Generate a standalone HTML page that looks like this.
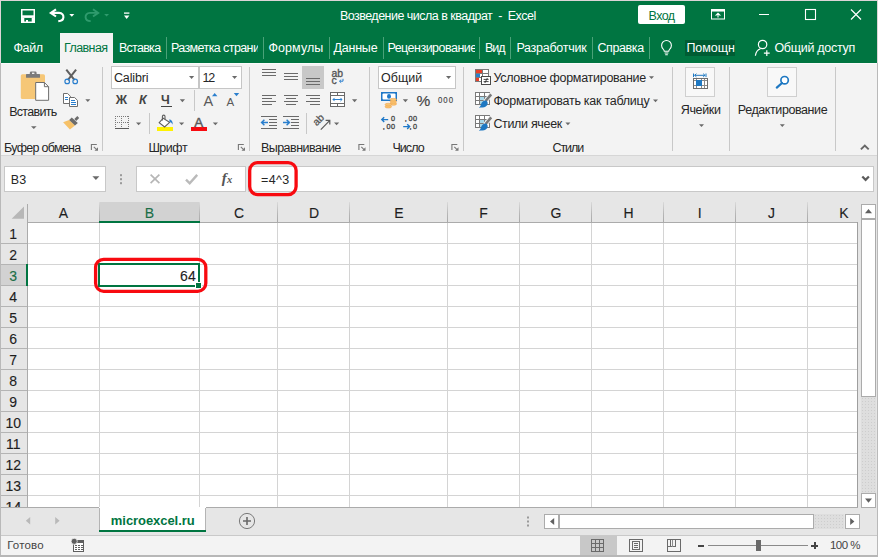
<!DOCTYPE html>
<html><head><meta charset="utf-8"><title>Excel</title>
<style>
html,body{margin:0;padding:0}
body{width:878px;height:557px;overflow:hidden;position:relative;background:#c4c4c4;font-family:"Liberation Sans",sans-serif;color:#262626}
.a{position:absolute}
.t{position:absolute;white-space:pre;display:block}
svg.ic{position:absolute;left:0;top:0;width:878px;height:557px;overflow:visible}
</style></head>
<body>
<div class="a" style="left:1px;top:1px;width:876px;height:554px;background:#f3f3f3;"></div>
<div class="a" style="left:1px;top:1px;width:876px;height:62px;background:#007541;"></div>
<div class="a" style="left:60px;top:33px;width:53px;height:30px;background:#f3f3f3;"></div>
<div class="a" style="left:166px;top:37px;width:1px;height:22px;background:#4aa278;"></div>
<div class="a" style="left:263px;top:37px;width:1px;height:22px;background:#4aa278;"></div>
<div class="a" style="left:329px;top:37px;width:1px;height:22px;background:#4aa278;"></div>
<div class="a" style="left:383px;top:37px;width:1px;height:22px;background:#4aa278;"></div>
<div class="a" style="left:479px;top:37px;width:1px;height:22px;background:#4aa278;"></div>
<div class="a" style="left:510px;top:37px;width:1px;height:22px;background:#4aa278;"></div>
<div class="a" style="left:592px;top:37px;width:1px;height:22px;background:#4aa278;"></div>
<div class="a" style="left:649px;top:37px;width:1px;height:22px;background:#4aa278;"></div>
<div class="a" style="left:685px;top:40px;width:50px;height:16px;background:#005c33;"></div>
<div class="a" style="left:638px;top:5px;width:47px;height:19px;background:#ffffff;border-radius:2px;"></div>
<span class="t" style="left:339.88px;top:10.00px;font-size:12.5px;line-height:12.5px;color:#ffffff;letter-spacing:-0.513px;">Возведение числа в квадрат  -  Excel</span>
<span class="t" style="left:648.58px;top:10.00px;font-size:12.5px;line-height:12.5px;color:#007541;letter-spacing:-0.610px;">Вход</span>
<span class="t" style="left:13.38px;top:42.00px;font-size:12.5px;line-height:12.5px;color:#ffffff;letter-spacing:-0.328px;">Файл</span>
<span class="t" style="left:63.88px;top:42.00px;font-size:12.5px;line-height:12.5px;color:#007541;letter-spacing:-0.555px;">Главная</span>
<span class="t" style="left:118.88px;top:42.00px;font-size:12.5px;line-height:12.5px;color:#ffffff;letter-spacing:-0.703px;">Вставка</span>
<span class="t" style="left:170.88px;top:42.00px;font-size:12.5px;line-height:12.5px;color:#ffffff;letter-spacing:-0.587px;width:87.4px;overflow:hidden;">Разметка страницы</span>
<span class="t" style="left:268.38px;top:42.00px;font-size:12.5px;line-height:12.5px;color:#ffffff;letter-spacing:0.091px;">Формулы</span>
<span class="t" style="left:333.38px;top:42.00px;font-size:12.5px;line-height:12.5px;color:#ffffff;letter-spacing:-0.184px;">Данные</span>
<span class="t" style="left:387.38px;top:42.00px;font-size:12.5px;line-height:12.5px;color:#ffffff;letter-spacing:-0.514px;width:87.9px;overflow:hidden;">Рецензирование</span>
<span class="t" style="left:484.88px;top:42.00px;font-size:12.5px;line-height:12.5px;color:#ffffff;letter-spacing:-0.938px;">Вид</span>
<span class="t" style="left:516.38px;top:42.00px;font-size:12.5px;line-height:12.5px;color:#ffffff;letter-spacing:-0.266px;">Разработчик</span>
<span class="t" style="left:597.38px;top:42.00px;font-size:12.5px;line-height:12.5px;color:#ffffff;letter-spacing:-0.383px;">Справка</span>
<span class="t" style="left:686.38px;top:42.00px;font-size:12.5px;line-height:12.5px;color:#ffffff;letter-spacing:-0.024px;width:48.6px;overflow:hidden;">Помощник</span>
<span class="t" style="left:774.38px;top:42.00px;font-size:12.5px;line-height:12.5px;color:#ffffff;letter-spacing:-0.285px;">Общий доступ</span>
<div class="a" style="left:102px;top:67px;width:1px;height:84px;background:#c8c8c8;"></div>
<div class="a" style="left:249px;top:67px;width:1px;height:84px;background:#c8c8c8;"></div>
<div class="a" style="left:369px;top:67px;width:1px;height:84px;background:#c8c8c8;"></div>
<div class="a" style="left:463px;top:67px;width:1px;height:84px;background:#c8c8c8;"></div>
<div class="a" style="left:672px;top:67px;width:1px;height:84px;background:#c8c8c8;"></div>
<div class="a" style="left:729px;top:67px;width:1px;height:84px;background:#c8c8c8;"></div>
<div class="a" style="left:835px;top:67px;width:1px;height:84px;background:#c8c8c8;"></div>
<div class="a" style="left:194px;top:90px;width:1px;height:21px;background:#c8c8c8;"></div>
<div class="a" style="left:149px;top:113px;width:1px;height:21px;background:#c8c8c8;"></div>
<div class="a" style="left:306px;top:113px;width:1px;height:21px;background:#c8c8c8;"></div>
<div class="a" style="left:1px;top:155px;width:876px;height:1px;background:#d6d6d6;"></div>
<div class="a" style="left:111px;top:66px;width:88px;height:23px;background:#ffffff;border:1px solid #c6c6c6;box-sizing:border-box;"></div>
<div class="a" style="left:199px;top:66px;width:43px;height:23px;background:#ffffff;border:1px solid #c6c6c6;box-sizing:border-box;"></div>
<div class="a" style="left:378px;top:66px;width:78px;height:23px;background:#ffffff;border:1px solid #c6c6c6;box-sizing:border-box;"></div>
<div class="a" style="left:302px;top:66px;width:22px;height:23px;background:#c8c8c8;"></div>
<div class="a" style="left:685px;top:67px;width:30px;height:30px;background:#f8f8f8;border:1px solid #cfcfcf;box-sizing:border-box;"></div>
<div class="a" style="left:767px;top:67px;width:30px;height:30px;background:#f8f8f8;border:1px solid #cfcfcf;box-sizing:border-box;"></div>
<span class="t" style="left:9.18px;top:106.00px;font-size:12.5px;line-height:12.5px;letter-spacing:-0.707px;">Вставить</span>
<span class="t" style="left:4.08px;top:142.00px;font-size:12.5px;line-height:12.5px;letter-spacing:-0.717px;">Буфер обмена</span>
<span class="t" style="left:148.38px;top:142.00px;font-size:12.5px;line-height:12.5px;letter-spacing:-0.473px;">Шрифт</span>
<span class="t" style="left:260.88px;top:142.00px;font-size:12.5px;line-height:12.5px;letter-spacing:-0.509px;">Выравнивание</span>
<span class="t" style="left:392.38px;top:142.00px;font-size:12.5px;line-height:12.5px;letter-spacing:-0.926px;">Число</span>
<span class="t" style="left:552.38px;top:142.00px;font-size:12.5px;line-height:12.5px;letter-spacing:-1.016px;">Стили</span>
<span class="t" style="left:113.97px;top:72.00px;font-size:12.5px;line-height:12.5px;letter-spacing:-0.131px;">Calibri</span>
<span class="t" style="left:202.38px;top:72.00px;font-size:12.5px;line-height:12.5px;letter-spacing:-1.200px;">12</span>
<span class="t" style="left:380.98px;top:72.00px;font-size:12.5px;line-height:12.5px;letter-spacing:0.027px;">Общий</span>
<span class="t" style="left:115.78px;top:94.00px;font-size:12.5px;line-height:12.5px;color:#444444;font-weight:bold;letter-spacing:1.200px;">Ж</span>
<span class="t" style="left:138.88px;top:94.00px;font-size:12.5px;line-height:12.5px;color:#444444;font-weight:bold;font-style:italic;letter-spacing:1.200px;">К</span>
<span class="t" style="left:160.88px;top:94.00px;font-size:12.5px;line-height:12.5px;color:#444444;font-weight:bold;letter-spacing:1.200px;">Ч</span>
<div class="a" style="left:161px;top:105.5px;width:10.5px;height:1px;background:#444444;"></div>
<span class="t" style="left:416.62px;top:93.00px;font-size:15.5px;line-height:15.5px;color:#444444;-webkit-text-stroke:0.15px;">%</span>
<span class="t" style="left:437.54px;top:96.00px;font-size:9.2px;line-height:9.2px;color:#444444;transform:scaleX(0.85);transform-origin:0 0;-webkit-text-stroke:0.15px;letter-spacing:1.200px;">000</span>
<span class="t" style="left:493.38px;top:72.00px;font-size:12.5px;line-height:12.5px;letter-spacing:-0.281px;">Условное форматирование</span>
<span class="t" style="left:493.38px;top:95.00px;font-size:12.5px;line-height:12.5px;letter-spacing:-0.266px;">Форматировать как таблицу</span>
<span class="t" style="left:493.38px;top:118.00px;font-size:12.5px;line-height:12.5px;letter-spacing:-0.329px;">Стили ячеек</span>
<span class="t" style="left:680.77px;top:104.00px;font-size:12.5px;line-height:12.5px;letter-spacing:-0.358px;">Ячейки</span>
<span class="t" style="left:737.77px;top:104.00px;font-size:12.5px;line-height:12.5px;letter-spacing:-0.414px;">Редактирование</span>
<div class="a" style="left:1px;top:156px;width:876px;height:46px;background:#e6e6e6;"></div>
<div class="a" style="left:4px;top:166px;width:102px;height:26px;background:#ffffff;border:1px solid #c8c8c8;box-sizing:border-box;"></div>
<div class="a" style="left:136px;top:166px;width:110px;height:26px;background:#ffffff;border:1px solid #c8c8c8;box-sizing:border-box;"></div>
<div class="a" style="left:248px;top:166px;width:626px;height:26px;background:#ffffff;border:1px solid #c8c8c8;box-sizing:border-box;"></div>
<span class="t" style="left:10.78px;top:174.00px;font-size:12.5px;line-height:12.5px;letter-spacing:0.153px;">B3</span>
<span class="t" style="left:261.07px;top:174.00px;font-size:12.5px;line-height:12.5px;letter-spacing:0.357px;">=4^3</span>
<span class="t" style="left:221.85px;top:171.00px;font-size:15px;line-height:15px;color:#555555;font-weight:bold;font-style:italic;font-family:'Liberation Serif',serif;">f</span>
<span class="t" style="left:227.07px;top:175.00px;font-size:10.5px;line-height:10.5px;color:#555555;font-weight:bold;font-style:italic;font-family:'Liberation Serif',serif;letter-spacing:1.200px;">x</span>
<div class="a" style="left:1px;top:202px;width:876px;height:306px;background:#e6e6e6;"></div>
<div class="a" style="left:27px;top:223px;width:830px;height:284px;background:#ffffff;"></div>
<div class="a" style="left:99px;top:202px;width:101px;height:19px;background:#d2d2d2;"></div>
<div class="a" style="left:1px;top:264px;width:26px;height:21px;background:#d2d2d2;"></div>
<div class="a" style="left:27px;top:243px;width:830px;height:1px;background:#d4d4d4;"></div>
<div class="a" style="left:27px;top:264px;width:830px;height:1px;background:#d4d4d4;"></div>
<div class="a" style="left:27px;top:285px;width:830px;height:1px;background:#d4d4d4;"></div>
<div class="a" style="left:27px;top:306px;width:830px;height:1px;background:#d4d4d4;"></div>
<div class="a" style="left:27px;top:327px;width:830px;height:1px;background:#d4d4d4;"></div>
<div class="a" style="left:27px;top:348px;width:830px;height:1px;background:#d4d4d4;"></div>
<div class="a" style="left:27px;top:369px;width:830px;height:1px;background:#d4d4d4;"></div>
<div class="a" style="left:27px;top:390px;width:830px;height:1px;background:#d4d4d4;"></div>
<div class="a" style="left:27px;top:411px;width:830px;height:1px;background:#d4d4d4;"></div>
<div class="a" style="left:27px;top:432px;width:830px;height:1px;background:#d4d4d4;"></div>
<div class="a" style="left:27px;top:453px;width:830px;height:1px;background:#d4d4d4;"></div>
<div class="a" style="left:27px;top:474px;width:830px;height:1px;background:#d4d4d4;"></div>
<div class="a" style="left:27px;top:495px;width:830px;height:1px;background:#d4d4d4;"></div>
<div class="a" style="left:99px;top:223px;width:1px;height:284px;background:#d4d4d4;"></div>
<div class="a" style="left:199px;top:223px;width:1px;height:284px;background:#d4d4d4;"></div>
<div class="a" style="left:277px;top:223px;width:1px;height:284px;background:#d4d4d4;"></div>
<div class="a" style="left:349px;top:223px;width:1px;height:284px;background:#d4d4d4;"></div>
<div class="a" style="left:447px;top:223px;width:1px;height:284px;background:#d4d4d4;"></div>
<div class="a" style="left:519px;top:223px;width:1px;height:284px;background:#d4d4d4;"></div>
<div class="a" style="left:591px;top:223px;width:1px;height:284px;background:#d4d4d4;"></div>
<div class="a" style="left:663px;top:223px;width:1px;height:284px;background:#d4d4d4;"></div>
<div class="a" style="left:735px;top:223px;width:1px;height:284px;background:#d4d4d4;"></div>
<div class="a" style="left:807px;top:223px;width:1px;height:284px;background:#d4d4d4;"></div>
<div class="a" style="left:99px;top:202px;width:1px;height:20px;background:linear-gradient(#dadada,#b6b6b6 60%,#a9a9a9);"></div>
<div class="a" style="left:199px;top:202px;width:1px;height:20px;background:linear-gradient(#dadada,#b6b6b6 60%,#a9a9a9);"></div>
<div class="a" style="left:277px;top:202px;width:1px;height:20px;background:linear-gradient(#dadada,#b6b6b6 60%,#a9a9a9);"></div>
<div class="a" style="left:349px;top:202px;width:1px;height:20px;background:linear-gradient(#dadada,#b6b6b6 60%,#a9a9a9);"></div>
<div class="a" style="left:447px;top:202px;width:1px;height:20px;background:linear-gradient(#dadada,#b6b6b6 60%,#a9a9a9);"></div>
<div class="a" style="left:519px;top:202px;width:1px;height:20px;background:linear-gradient(#dadada,#b6b6b6 60%,#a9a9a9);"></div>
<div class="a" style="left:591px;top:202px;width:1px;height:20px;background:linear-gradient(#dadada,#b6b6b6 60%,#a9a9a9);"></div>
<div class="a" style="left:663px;top:202px;width:1px;height:20px;background:linear-gradient(#dadada,#b6b6b6 60%,#a9a9a9);"></div>
<div class="a" style="left:735px;top:202px;width:1px;height:20px;background:linear-gradient(#dadada,#b6b6b6 60%,#a9a9a9);"></div>
<div class="a" style="left:807px;top:202px;width:1px;height:20px;background:linear-gradient(#dadada,#b6b6b6 60%,#a9a9a9);"></div>
<div class="a" style="left:1px;top:243px;width:26px;height:1px;background:#b4b4b4;"></div>
<div class="a" style="left:1px;top:264px;width:26px;height:1px;background:#b4b4b4;"></div>
<div class="a" style="left:1px;top:285px;width:26px;height:1px;background:#b4b4b4;"></div>
<div class="a" style="left:1px;top:306px;width:26px;height:1px;background:#b4b4b4;"></div>
<div class="a" style="left:1px;top:327px;width:26px;height:1px;background:#b4b4b4;"></div>
<div class="a" style="left:1px;top:348px;width:26px;height:1px;background:#b4b4b4;"></div>
<div class="a" style="left:1px;top:369px;width:26px;height:1px;background:#b4b4b4;"></div>
<div class="a" style="left:1px;top:390px;width:26px;height:1px;background:#b4b4b4;"></div>
<div class="a" style="left:1px;top:411px;width:26px;height:1px;background:#b4b4b4;"></div>
<div class="a" style="left:1px;top:432px;width:26px;height:1px;background:#b4b4b4;"></div>
<div class="a" style="left:1px;top:453px;width:26px;height:1px;background:#b4b4b4;"></div>
<div class="a" style="left:1px;top:474px;width:26px;height:1px;background:#b4b4b4;"></div>
<div class="a" style="left:1px;top:495px;width:26px;height:1px;background:#b4b4b4;"></div>
<div class="a" style="left:27px;top:222px;width:831px;height:1px;background:#ababab;"></div>
<div class="a" style="left:27px;top:204px;width:1px;height:303px;background:#ababab;"></div>
<div class="a" style="left:857px;top:222px;width:1px;height:286px;background:#9e9e9e;"></div>
<div class="a" style="left:1px;top:507px;width:857px;height:1px;background:#ababab;"></div>
<div class="a" style="left:99px;top:221px;width:101px;height:2px;background:#007541;"></div>
<div class="a" style="left:26px;top:264px;width:2px;height:22px;background:#007541;"></div>
<span class="t" style="left:58.83px;top:206.00px;font-size:14px;line-height:14px;color:#1e1e1e;-webkit-text-stroke:0.12px;">A</span>
<span class="t" style="left:144.83px;top:206.00px;font-size:14px;line-height:14px;color:#1b6e47;-webkit-text-stroke:0.12px;">B</span>
<span class="t" style="left:233.94px;top:206.00px;font-size:14px;line-height:14px;color:#1e1e1e;-webkit-text-stroke:0.12px;">C</span>
<span class="t" style="left:308.94px;top:206.00px;font-size:14px;line-height:14px;color:#1e1e1e;-webkit-text-stroke:0.12px;">D</span>
<span class="t" style="left:394.33px;top:206.00px;font-size:14px;line-height:14px;color:#1e1e1e;-webkit-text-stroke:0.12px;">E</span>
<span class="t" style="left:479.22px;top:206.00px;font-size:14px;line-height:14px;color:#1e1e1e;-webkit-text-stroke:0.12px;">F</span>
<span class="t" style="left:550.55px;top:206.00px;font-size:14px;line-height:14px;color:#1e1e1e;-webkit-text-stroke:0.12px;">G</span>
<span class="t" style="left:623.44px;top:206.00px;font-size:14px;line-height:14px;color:#1e1e1e;-webkit-text-stroke:0.12px;">H</span>
<span class="t" style="left:697.85px;top:206.00px;font-size:14px;line-height:14px;color:#1e1e1e;-webkit-text-stroke:0.12px;">I</span>
<span class="t" style="left:768.00px;top:206.00px;font-size:14px;line-height:14px;color:#1e1e1e;-webkit-text-stroke:0.12px;">J</span>
<span class="t" style="left:839.33px;top:206.00px;font-size:14px;line-height:14px;color:#1e1e1e;-webkit-text-stroke:0.12px;">K</span>
<span class="t" style="left:9.30px;top:227.00px;font-size:14px;line-height:14px;color:#1e1e1e;-webkit-text-stroke:0.12px;">1</span>
<span class="t" style="left:9.30px;top:248.00px;font-size:14px;line-height:14px;color:#1e1e1e;-webkit-text-stroke:0.12px;">2</span>
<span class="t" style="left:9.30px;top:269.00px;font-size:14px;line-height:14px;color:#1b6e47;-webkit-text-stroke:0.12px;">3</span>
<span class="t" style="left:9.30px;top:290.00px;font-size:14px;line-height:14px;color:#1e1e1e;-webkit-text-stroke:0.12px;">4</span>
<span class="t" style="left:9.30px;top:311.00px;font-size:14px;line-height:14px;color:#1e1e1e;-webkit-text-stroke:0.12px;">5</span>
<span class="t" style="left:9.30px;top:332.00px;font-size:14px;line-height:14px;color:#1e1e1e;-webkit-text-stroke:0.12px;">6</span>
<span class="t" style="left:9.30px;top:353.00px;font-size:14px;line-height:14px;color:#1e1e1e;-webkit-text-stroke:0.12px;">7</span>
<span class="t" style="left:9.30px;top:374.00px;font-size:14px;line-height:14px;color:#1e1e1e;-webkit-text-stroke:0.12px;">8</span>
<span class="t" style="left:9.30px;top:395.00px;font-size:14px;line-height:14px;color:#1e1e1e;-webkit-text-stroke:0.12px;">9</span>
<span class="t" style="left:5.41px;top:416.00px;font-size:14px;line-height:14px;color:#1e1e1e;-webkit-text-stroke:0.12px;">10</span>
<span class="t" style="left:5.93px;top:437.00px;font-size:14px;line-height:14px;color:#1e1e1e;-webkit-text-stroke:0.12px;">11</span>
<span class="t" style="left:5.41px;top:458.00px;font-size:14px;line-height:14px;color:#1e1e1e;-webkit-text-stroke:0.12px;">12</span>
<span class="t" style="left:5.41px;top:479.00px;font-size:14px;line-height:14px;color:#1e1e1e;-webkit-text-stroke:0.12px;">13</span>
<div class="a" style="left:1px;top:496px;width:26px;height:11px;overflow:hidden"><span class="t" style="left:4.6px;top:4px;color:#1e1e1e;font-size:14px;line-height:14px;-webkit-text-stroke:.25px">14</span></div>
<div class="a" style="left:98px;top:263px;width:102px;height:24px;border:2px solid #007541;box-sizing:border-box;"></div>
<div class="a" style="left:195px;top:282px;width:7px;height:7px;background:#ffffff;"></div>
<div class="a" style="left:196px;top:283px;width:5px;height:5px;background:#007541;"></div>
<span class="t" style="left:180.12px;top:269.00px;font-size:14px;line-height:14px;color:#1e1e1e;-webkit-text-stroke:0.12px;">64</span>
<svg class="ic" viewBox="0 0 878 557"><g fill="none" stroke="#f80a10" stroke-width="3.3"><rect x="249.7" y="162.6" width="46.4" height="32" rx="8"/><rect x="95.6" y="259.3" width="110.2" height="32" rx="8"/></g></svg>
<div class="a" style="left:861px;top:204px;width:15px;height:15px;background:#ffffff;border:1px solid #ababab;box-sizing:border-box;"></div>
<div class="a" style="left:861px;top:219px;width:15px;height:178px;background:#ffffff;border:1px solid #ababab;box-sizing:border-box;"></div>
<div class="a" style="left:861px;top:397px;width:15px;height:96px;background:#dedede;background-image:radial-gradient(circle,#cdcdcd 0.7px,transparent 0.9px);background-size:3px 3px;"></div>
<div class="a" style="left:861px;top:493px;width:15px;height:15px;background:#ffffff;border:1px solid #ababab;box-sizing:border-box;"></div>
<div class="a" style="left:1px;top:508px;width:876px;height:27px;background:#e6e6e6;"></div>
<div class="a" style="left:99px;top:507px;width:107px;height:24px;background:#ffffff;"></div>
<div class="a" style="left:99px;top:530px;width:107px;height:2px;background:#007541;"></div>
<div class="a" style="left:99px;top:508px;width:1px;height:22px;background:#b4b4b4;"></div>
<div class="a" style="left:205px;top:508px;width:1px;height:22px;background:#b4b4b4;"></div>
<span class="t" style="left:110.85px;top:514.00px;font-size:13px;line-height:13px;color:#007541;font-weight:bold;letter-spacing:-0.062px;">microexcel.ru</span>
<div class="a" style="left:544px;top:514px;width:15px;height:15px;background:#ffffff;border:1px solid #ababab;box-sizing:border-box;"></div>
<div class="a" style="left:559px;top:514px;width:255px;height:15px;background:#ffffff;border:1px solid #ababab;box-sizing:border-box;"></div>
<div class="a" style="left:814px;top:514px;width:30px;height:15px;background:#dedede;background-image:radial-gradient(circle,#cdcdcd 0.7px,transparent 0.9px);background-size:3px 3px;"></div>
<div class="a" style="left:845px;top:514px;width:15px;height:15px;background:#ffffff;border:1px solid #ababab;box-sizing:border-box;"></div>
<div class="a" style="left:1px;top:535px;width:876px;height:1px;background:#c9c9c9;"></div>
<div class="a" style="left:1px;top:536px;width:876px;height:19px;background:#f3f3f3;"></div>
<div class="a" style="left:580px;top:536px;width:37px;height:19px;background:#c8c8c8;"></div>
<span class="t" style="left:7.22px;top:540.00px;font-size:11.5px;line-height:11.5px;color:#444444;letter-spacing:0.167px;">Готово</span>
<span class="t" style="left:829.92px;top:540.00px;font-size:11.5px;line-height:11.5px;color:#444444;letter-spacing:-0.490px;">100 %</span>
<div class="a" style="left:0px;top:0px;width:878px;height:1px;background:#dcd5d7;"></div>
<div class="a" style="left:0px;top:1px;width:1px;height:62px;background:#dcd5d7;"></div>
<div class="a" style="left:877px;top:1px;width:1px;height:62px;background:#dcd5d7;"></div>
<div class="a" style="left:0px;top:63px;width:1px;height:494px;background:#b9b9b9;"></div>
<div class="a" style="left:877px;top:63px;width:1px;height:494px;background:#b9b9b9;"></div>
<div class="a" style="left:0px;top:555px;width:878px;height:2px;background:#b7b7b7;"></div>
<div class="a" style="left:1px;top:63px;width:876px;height:1px;background:#fafafa;"></div>
<div class="a" style="left:60px;top:63px;width:53px;height:1px;background:#f3f3f3;"></div>
<svg class="ic" viewBox="0 0 878 557" font-family="Liberation Sans, sans-serif">
<!-- ===== title bar / QAT ===== -->
<g fill="none" stroke="#fff">
  <rect x="21.75" y="9.75" width="12.5" height="12.5" stroke-width="1.5"/>
  <path d="M22 16.6H34" stroke-width="2.6"/>
  <path d="M23 18v4M33 18v4" stroke-width="2.6"/>
  <path d="M27 20v2.4" stroke-width="2"/>
  <!-- undo -->
  <path d="M56 9.3 L50.8 12.9 L56 16.5" stroke-width="2.1"/>
  <path d="M51.2 12.9 H59 C62.4 12.9 63.6 15.4 63.4 17.3 C63.2 19.6 61.2 21 58.3 21.1" stroke-width="2.1"/>
  <!-- customize -->
  <path d="M124 13.1H129.4" stroke-width="1.3"/>
  <!-- ribbon display -->
  <rect x="711.5" y="9.5" width="13" height="9.5" stroke-width="1"/>
  <path d="M711.5 10.7H724.5" stroke-width="1.7"/>
  <path d="M718 17.6V13.3M715.6 15.6l2.4-2.4 2.4 2.4" stroke-width="1.1"/>
  <!-- min / max / close -->
  <path d="M759 14.5H769" stroke-width="1"/>
  <rect x="805.5" y="9.5" width="10" height="10" stroke-width="1.1"/>
  <path d="M851 9.5l10 10M861 9.5l-10 10" stroke-width="1.2"/>
  <!-- bulb -->
  <path d="M664.3 51.2 C664.3 49.5 661.6 48.6 661.6 45.4 A4.9 4.9 0 0 1 671.4 45.4 C671.4 48.6 668.7 49.5 668.7 51.2 Z" stroke-width="1.1"/>
  <path d="M664.6 53H668.4M665.2 54.8H667.8" stroke-width="1.1"/>
  <!-- share -->
  <circle cx="762.6" cy="44.5" r="4.2" stroke-width="1.2"/>
  <path d="M755.4 55.8 C755.9 51.6 758 49.6 760.4 48.8" stroke-width="1.2"/>
  <path d="M766.8 50.2V56M763.9 53.1H769.7" stroke-width="1.2"/>
</g>
<g fill="#fff">
  <path d="M69.3 14h5l-2.5 2.8z"/>
  <path d="M124 15.6h5.4l-2.7 3.4z"/>
</g>
<!-- redo (disabled) -->
<g fill="none" stroke="#2f9b6d" stroke-width="1.9">
  <path d="M93 9.3 L98.2 12.9 L93 16.5"/>
  <path d="M97.8 12.9 H90 C86.6 12.9 85.4 15.4 85.6 17.3 C85.8 19.6 87.8 21 90.7 21.1"/>
</g>
<path d="M104.2 14h4.8l-2.4 2.6z" fill="#2f9b6d"/>

<!-- ===== Clipboard group ===== -->
<rect x="20.8" y="74.2" width="24.2" height="24.8" rx="1.6" fill="#f6c777"/>
<rect x="26" y="74" width="14" height="3.8" rx=".6" fill="#7b7b7b"/>
<path d="M29.8 75v-2.2a1.4 1.4 0 0 1 1.4-1.4h4a1.4 1.4 0 0 1 1.4 1.4V75z" fill="#7b7b7b"/>
<rect x="32" y="72.6" width="2.4" height="1.4" fill="#f3f3f3"/>
<path d="M35.7 82.5H44.4L48.6 86.7V100.3H35.7Z" fill="#fff" stroke="#6e6e6e" stroke-width="1"/>
<path d="M44.4 82.5V86.7H48.6" fill="none" stroke="#6e6e6e" stroke-width="1"/>
<path d="M31 126.2h5.6l-2.8 2.9z" fill="#6a6a6a"/>
<!-- scissors -->
<g fill="none">
  <path d="M66.3 69.7 L74.6 80.2M76.1 69.7 L67.8 80.2" stroke="#5f5f5f" stroke-width="2"/>
  <circle cx="67.2" cy="81.4" r="2.3" stroke="#2a7fce" stroke-width="1.2"/>
  <circle cx="75.2" cy="81.4" r="2.3" stroke="#2a7fce" stroke-width="1.2"/>
</g>
<!-- copy -->
<g fill="#fff" stroke="#6e6e6e" stroke-width="1">
  <path d="M63.5 93.5H67.6L70.5 96.4V103.5H63.5Z"/>
  <path d="M69.5 97.5H74.6L77.5 100.4V106.5H69.5Z"/>
</g>
<path d="M65 97.5h3M65 99.5h3M71 100.5h4M71 102.5h5M71 104.5h5" stroke="#2a7fce" stroke-width="1" fill="none" shape-rendering="crispEdges"/>
<path d="M85.3 99.3h5l-2.5 2.8z" fill="#6a6a6a"/>
<!-- format painter -->
<path d="M69.1 119.9 L75 125.4 L69.9 129.4 L63.1 122.3 Z" fill="#f6c168"/>
<path d="M71.8 117.5 L77.8 123 L75 125.4 L69.1 119.9 Z" fill="#6b6b6b"/>
<path d="M74.3 119.1 L77.3 116.1 L79.2 118 L76.2 121 Z" fill="#6b6b6b"/>
<!-- dialog launchers -->
<g><path d="M91.4 150V144.5H96.8" fill="none" stroke="#777" stroke-width="1.1"/><path d="M93.8 146.9L96.6 149.7" fill="none" stroke="#777" stroke-width="1.1"/><path d="M98 147.3V150.8H94.5z" fill="#777"/></g>
<g transform="translate(147 0)"><path d="M91.4 150V144.5H96.8" fill="none" stroke="#777" stroke-width="1.1"/><path d="M93.8 146.9L96.6 149.7" fill="none" stroke="#777" stroke-width="1.1"/><path d="M98 147.3V150.8H94.5z" fill="#777"/></g>
<g transform="translate(267.5 0)"><path d="M91.4 150V144.5H96.8" fill="none" stroke="#777" stroke-width="1.1"/><path d="M93.8 146.9L96.6 149.7" fill="none" stroke="#777" stroke-width="1.1"/><path d="M98 147.3V150.8H94.5z" fill="#777"/></g>
<g transform="translate(360.5 0)"><path d="M91.4 150V144.5H96.8" fill="none" stroke="#777" stroke-width="1.1"/><path d="M93.8 146.9L96.6 149.7" fill="none" stroke="#777" stroke-width="1.1"/><path d="M98 147.3V150.8H94.5z" fill="#777"/></g>

<!-- ===== Font group ===== -->
<g fill="#6a6a6a">
  <path d="M189 76.1h5.2l-2.6 2.9z"/>
  <path d="M232 76.1h5.2l-2.6 2.9z"/>
  <path d="M179.8 99.3h5.2l-2.6 2.9z"/>
  <path d="M136 122.4h5.2l-2.6 2.9z"/>
  <path d="M179 122.4h5.2l-2.6 2.9z"/>
  <path d="M212.8 122.4h5.2l-2.6 2.9z"/>
</g>
<text x="203.6" y="105.8" font-size="14.5" fill="#5a5a5a">A</text>
<text x="226.6" y="105.8" font-size="11.5" fill="#5a5a5a">A</text>
<path d="M212 96.2h5.4l-2.7-3.2z" fill="#2a7fce"/>
<path d="M233.8 93h5.4l-2.7 3.2z" fill="#2a7fce"/>
<!-- borders icon -->
<g stroke="#6a6a6a" stroke-width="1" fill="none">
  <path d="M115 116.5H129M115 122.5H129M115.5 116V128M121.5 116V128M128.5 116V128" stroke-dasharray="1 1" shape-rendering="crispEdges" stroke="#7a7a7a"/>
  <path d="M115 128.5H129" shape-rendering="crispEdges" stroke="#5a5a5a"/>
</g>
<!-- fill bucket -->
<rect x="157" y="127" width="16" height="4" fill="#fff200"/>
<g fill="none" stroke="#5f5f5f" stroke-width="1.1">
  <path d="M163.2 118.2 L169.6 122.4 L164.6 127 L159.2 122.6 Z" fill="#fff"/>
  <path d="M162.4 120.4V116.4a1.3 1.3 0 0 1 2.6 0v2.6"/>
</g>
<path d="M169.4 119.2c2.6.6 3.6 2.6 3.2 5.6c-.6-1.6-1.6-2.6-3.2-3z" fill="#2a7fce"/>
<!-- font color -->
<rect x="191" y="127" width="16" height="4" fill="#f80a10"/>
<text x="194.2" y="126.5" font-size="13.4" fill="#5a5a5a" stroke="#5a5a5a" stroke-width=".45">A</text>

<!-- ===== Alignment group ===== -->
<g stroke="#6a6a6a" stroke-width="1" fill="none" shape-rendering="crispEdges">
  <path d="M262 69.5h14M262 72.5h14M262 75.5h14"/>
  <path d="M284 73.5h14M284 76.5h14M284 79.5h14"/>
  <path d="M306 78.5h14M306 81.5h14M306 84.5h14"/>
  <path d="M262 95.5h14M262 98.5h10M262 101.5h14M262 104.5h10"/>
  <path d="M284 95.5h14M286 98.5h10M284 101.5h14M286 104.5h10"/>
  <path d="M306 95.5h14M310 98.5h10M306 101.5h14M310 104.5h10"/>
  <path d="M261 116.5h16M261 128.5h16M269 119.5h8M269 122.5h8M269 125.5h8"/>
  <path d="M283 116.5h16M283 128.5h16M291 119.5h8M291 122.5h8M291 125.5h8"/>
</g>
<g stroke="#2a7fce" stroke-width="1.5" fill="none">
  <path d="M261.6 122.5h6.4M264.4 119.8l-2.8 2.7 2.8 2.7"/>
  <path d="M283 122.5h6.4M286.6 119.8l2.8 2.7-2.8 2.7"/>
</g>
<!-- wrap text -->
<text x="331.4" y="77.2" font-size="10.4" fill="#555" stroke="#555" stroke-width=".35">ab</text>
<text x="331.4" y="84" font-size="10.4" fill="#555" stroke="#555" stroke-width=".35">c</text>
<path d="M343 78.8v2.4h-3.4M341.2 79.6l-1.7 1.6 1.7 1.6" stroke="#2a7fce" stroke-width="1" fill="none"/>
<!-- merge -->
<g stroke="#6a6a6a" stroke-width="1" fill="none" shape-rendering="crispEdges">
  <rect x="330.5" y="92.5" width="14" height="14" fill="#fff"/>
  <path d="M330.5 95.5h14M330.5 103.5h14M337.5 92.5v3M337.5 103.5v3"/>
</g>
<path d="M333 99.5h9M334.6 97.9l-1.6 1.6 1.6 1.6M340.4 97.9l1.6 1.6-1.6 1.6" stroke="#2a7fce" stroke-width="1" fill="none"/>
<g fill="#6a6a6a">
  <path d="M352 99.3h5.2l-2.6 2.9z"/>
  <path d="M334 122.4h5.2l-2.6 2.9z"/>
</g>
<!-- orientation -->
<text transform="translate(316.8 126.2) rotate(-45)" font-size="10.2" fill="#555" stroke="#555" stroke-width=".3">ab</text>
<path d="M320.8 129.6L329.6 120.6M325.6 120.4h4.2v4.2" stroke="#5a5a5a" stroke-width="1.2" fill="none"/>

<!-- ===== Number group ===== -->
<path d="M446 76.1h5.2l-2.6 2.9z" fill="#6a6a6a"/>
<rect x="381" y="92" width="16" height="9" fill="#1e78c8"/>
<rect x="382.5" y="93.5" width="13" height="6" rx="1" fill="#fff"/>
<ellipse cx="389" cy="96.4" rx="2" ry="2.3" fill="#1e78c8"/>
<g fill="#f8c572" stroke="#ee9d4a" stroke-width=".5">
  <ellipse cx="393.3" cy="103.9" rx="3.3" ry="1.4"/>
  <ellipse cx="393.3" cy="101.8" rx="3.3" ry="1.4"/>
  <ellipse cx="393.3" cy="99.7" rx="3.3" ry="1.4"/>
  <ellipse cx="388.3" cy="106.7" rx="3.3" ry="1.4"/>
  <ellipse cx="388.3" cy="104.6" rx="3.3" ry="1.4"/>
</g>
<path d="M402.8 99.3h5.2l-2.6 2.9z" fill="#6a6a6a"/>
<!-- decimals -->
<g font-size="7.3" fill="#444" stroke="#444" stroke-width=".3">
  <text x="390.9" y="121.2">0</text>
  <text x="382.8 386.4 390.9" y="128.8">,00</text>
  <text x="404.8 408.4 412.9" y="121.2">,00</text>
  <text x="409.4 412.9" y="128.8">,0</text>
</g>
<g stroke="#1e78c8" stroke-width="1.4" fill="none">
  <path d="M381.8 119.6h6.4M384.2 117.2l-2.4 2.4 2.4 2.4"/>
  <path d="M403.2 126.6h6.4M407.2 124.2l2.4 2.4-2.4 2.4"/>
</g>

<!-- ===== Styles group ===== -->
<g shape-rendering="crispEdges">
  <rect x="475.5" y="69.5" width="13" height="12" fill="#fff" stroke="#7a7a7a"/>
  <path d="M475.5 73.5h13M475.5 77.5h13M482.5 69.5v12" stroke="#7a7a7a" fill="none"/>
  <rect x="476" y="70" width="6" height="3" fill="#e8402a"/>
  <rect x="476" y="74" width="4" height="3" fill="#2a7fce"/>
  <rect x="476" y="78" width="3" height="3" fill="#e8402a"/>
  <rect x="481.5" y="76.5" width="9" height="8" fill="#fff" stroke="#4a4a4a"/>
</g>
<path d="M483.6 79.4h5M483.6 81.6h5M487.4 78l-2.6 5" stroke="#333" stroke-width=".9" fill="none"/>
<g>
  <g shape-rendering="crispEdges" stroke="#7a7a7a" fill="none">
    <rect x="475.5" y="92.5" width="14" height="12" fill="#fff"/>
    <path d="M475.5 96.5h14M475.5 100.5h14M479.5 92.5v12M484.5 92.5v12"/>
    <rect x="480" y="97" width="4" height="3" fill="#a8d8ea" stroke="none"/>
    <rect x="485" y="97" width="4" height="3" fill="#a8d8ea" stroke="none"/>
    <rect x="480" y="101" width="4" height="3" fill="#a8d8ea" stroke="none"/>
  </g>
  <path d="M491.4 94.2l-6.4 7.4" stroke="#f3f3f3" stroke-width="4.4"/>
  <path d="M491.2 94.4l-5.6 6.6" stroke="#7a7a7a" stroke-width="2.6"/>
  <path d="M486.6 100.8c1.8 1.6 1.4 4.4-.8 5.8c-2 1.2-4.6.8-7 1.4c1.6-1.2 1.8-2.4 2.4-4.2c.8-2.4 3.4-4 5.4-3z" fill="#1e78c2"/>
</g>
<g transform="translate(0 23)">
  <g shape-rendering="crispEdges" stroke="#7a7a7a" fill="none">
    <rect x="475.5" y="92.5" width="14" height="12" fill="#fff"/>
    <path d="M475.5 96.5h14M475.5 100.5h14M479.5 92.5v12M484.5 92.5v12"/>
    <rect x="480" y="97" width="4" height="3" fill="#a8d8ea" stroke="none"/>
    <rect x="485" y="97" width="4" height="3" fill="#a8d8ea" stroke="none"/>
    <rect x="480" y="101" width="4" height="3" fill="#a8d8ea" stroke="none"/>
  </g>
  <path d="M491.4 94.2l-6.4 7.4" stroke="#f3f3f3" stroke-width="4.4"/>
  <path d="M491.2 94.4l-5.6 6.6" stroke="#7a7a7a" stroke-width="2.6"/>
  <path d="M486.6 100.8c1.8 1.6 1.4 4.4-.8 5.8c-2 1.2-4.6.8-7 1.4c1.6-1.2 1.8-2.4 2.4-4.2c.8-2.4 3.4-4 5.4-3z" fill="#1e78c2"/>
</g>

<g fill="#6a6a6a">
  <path d="M649 76.3h5l-2.5 2.8z"/>
  <path d="M653 99.4h5l-2.5 2.8z"/>
  <path d="M565.4 122.4h5l-2.5 2.8z"/>
  <path d="M699 124.3h5l-2.5 2.8z"/>
  <path d="M779.8 124.3h5l-2.5 2.8z"/>
</g>
<!-- cells icon -->
<g shape-rendering="crispEdges" stroke="#6e6e6e" fill="none">
  <rect x="693.5" y="78.5" width="14" height="10" fill="#fff"/>
  <path d="M693.5 80.5h14M693.5 85.5h14M696.5 78.5v10M701.5 78.5v10M704.5 78.5v10" stroke="#8a8a8a"/>
  <rect x="693.5" y="78.5" width="14" height="10"/>
  <rect x="696" y="80" width="6" height="6" fill="#1e78c2" stroke="none"/>
</g>
<path d="M693.5 73.5v3.6M706 73.5v3.6M694.5 75.3h10.6M696.4 73.7l-1.7 1.6 1.7 1.6M703.2 73.7l1.7 1.6-1.7 1.6" stroke="#1e78c2" stroke-width="1" fill="none"/>
<!-- search icon -->
<circle cx="784.6" cy="80.2" r="3.7" fill="#fff" stroke="#1e78c2" stroke-width="1.7"/>
<path d="M782 83l-5.2 4.6" stroke="#1e78c2" stroke-width="2.2" stroke-linecap="round"/>
<!-- collapse ribbon -->
<path d="M860.9 149.4l3.9-3.9 3.9 3.9" stroke="#666" stroke-width="1.9" fill="none"/>

<!-- ===== formula bar ===== -->
<path d="M92.4 176.2h7l-3.5 3.9z" fill="#6a6a6a"/>
<g fill="#9a9a9a"><rect x="120" y="174.2" width="2" height="2"/><rect x="120" y="178.2" width="2" height="2"/><rect x="120" y="182.2" width="2" height="2"/></g>
<path d="M150.6 174.7l8.8 8.5M159.4 174.7l-8.8 8.5" stroke="#b6b6b6" stroke-width="1.7" fill="none"/>
<path d="M186 179.6l3.7 3.7 7.5-8.4" stroke="#bababa" stroke-width="2.4" fill="none"/>
<path d="M862.3 176.4l3.3 3.4 3.3-3.4" stroke="#5c5c5c" stroke-width="2.2" fill="none"/>
<!-- select-all triangle -->
<path d="M24 206.5v12.3h-12.3z" fill="#b7b7b7"/>

<!-- ===== scrollbars ===== -->
<g fill="#606060">
  <path d="M865 213.2h7l-3.5-4.2z"/>
  <path d="M865 498.6h7l-3.5 4.2z"/>
  <path d="M554.2 518v7l-4.2-3.5z"/>
  <path d="M850.2 518v7l4.2-3.5z"/>
</g>
<g fill="#9a9a9a"><rect x="527" y="516.5" width="2" height="2"/><rect x="527" y="520.5" width="2" height="2"/><rect x="527" y="524.5" width="2" height="2"/></g>
<!-- sheet nav -->
<path d="M30.2 517v7.4l-4.4-3.7zM55.2 517v7.4l4.4-3.7z" fill="#b9b9b9"/>
<!-- add sheet -->
<circle cx="247" cy="521" r="7.6" fill="none" stroke="#7a7a7a" stroke-width="1"/>
<path d="M243 521h8M247 517v8" stroke="#6a6a6a" stroke-width="1.6" fill="none"/>

<!-- ===== status bar ===== -->
<g shape-rendering="crispEdges">
  <rect x="73.5" y="540.5" width="10" height="11" fill="#fff" stroke="#5f5f5f"/>
  <rect x="74" y="540" width="10" height="3" fill="#5f5f5f"/>
  <path d="M75 545.5h2M78 545.5h2M81 545.5h2M75 547.5h2M78 547.5h2M81 547.5h2M75 549.5h2M78 549.5h2M81 549.5h2" stroke="#5f5f5f" stroke-width="1"/>
</g>
<circle cx="74.2" cy="541.3" r="3.1" fill="#5f5f5f" stroke="#f3f3f3" stroke-width=".8"/>
<g shape-rendering="crispEdges" stroke="#6a6a6a" fill="none">
  <rect x="591.5" y="539.5" width="12" height="12"/>
  <path d="M595.5 539.5v12M599.5 539.5v12M591.5 543.5h12M591.5 547.5h12"/>
  <rect x="629.5" y="539.5" width="13" height="12"/>
  <rect x="632.5" y="541.5" width="7" height="8"/>
  <path d="M634 543.5h4M634 545.5h4M634 547.5h4"/>
  <rect x="667.5" y="539.5" width="13" height="12"/>
  <path d="M670.5 539.5v7M675.5 539.5v7M667.5 546.5h8.5" />
  <path d="M672.5 539.5v7" stroke="#8c8c8c"/>
  <path d="M708 545.5h100" stroke="#8a8a8a"/>
  <rect x="756" y="540" width="5" height="11" fill="#6a6a6a" stroke="none"/>
  <path d="M698 545.5h6" stroke="#444" stroke-width="2"/>
  <path d="M811 545.5h7M814.5 542v7" stroke="#444" stroke-width="2"/>
</g>
</svg>

</body></html>
